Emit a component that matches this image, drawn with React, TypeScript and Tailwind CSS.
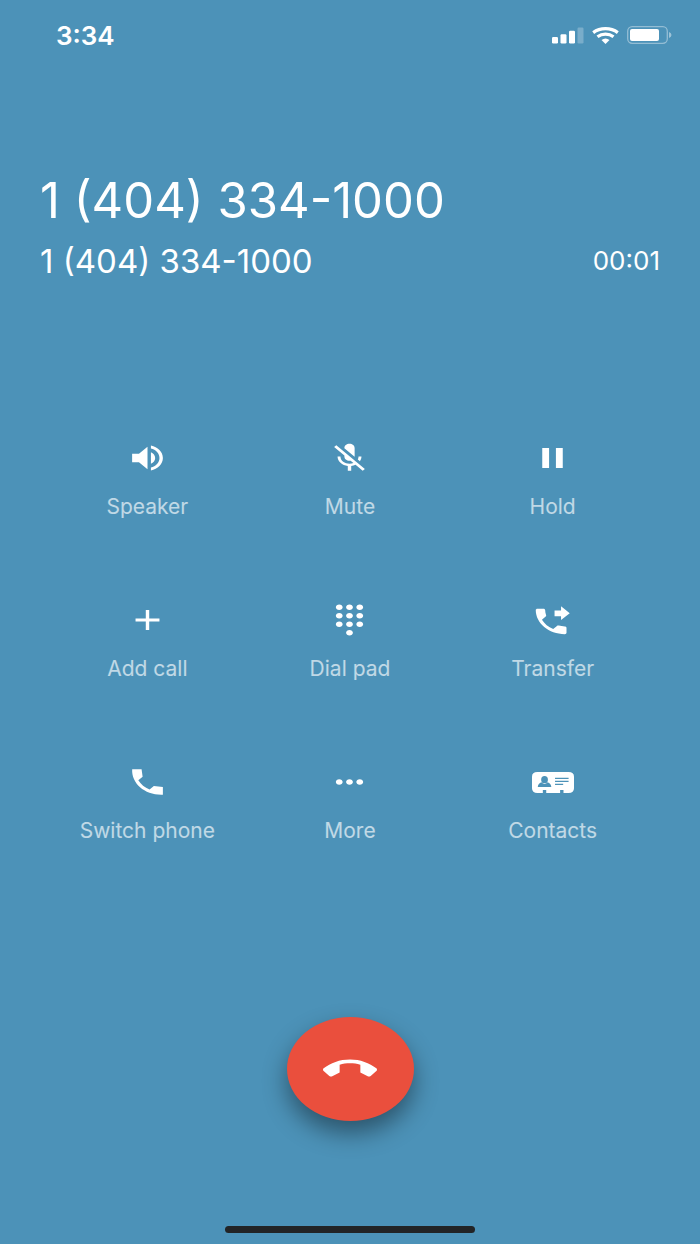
import type { ReactNode } from "react";

type IconProps = {
    path: string;
    className?: string;
};

type Action = {
    label: string;
    icon: ReactNode;
};

const Icon = ({ path, className = "w-[41px] h-[34px]" }: IconProps) => (
    <svg viewBox="0 0 24 24" preserveAspectRatio="none" fill="currentColor" className={className} aria-hidden="true">
        <path d={path} />
    </svg>
);

const ContactsIcon = () => (
    <span className="flex h-[34px] items-center">
        <svg viewBox="0 0 124 63" preserveAspectRatio="none" className="w-[42px] h-[21px]" aria-hidden="true">
            <path
                fill="currentColor"
                d="M16 0H108Q124 0 124 14V49Q124 63 108 63H93V54H83V63H42V54H32V63H16Q0 63 0 49V14Q0 0 16 0Z"
            />
            <g fill="#4c92b8">
                <ellipse cx="37" cy="23" rx="10" ry="11" />
                <path d="M17 45Q18 34 28 31Q37 41 46 31Q56 34 57 45Z" />
                <path d="M68 17H108V21H68ZM68 26H108V30H68ZM68 35H92V39H68Z" />
            </g>
        </svg>
    </span>
);

const actions: Action[] = [
    {
        label: "Speaker",
        icon: <Icon path="M3 9v6h4l5 5V4L7 9H3zm13.5 3c0-1.77-1.02-3.29-2.5-4.03v8.05c1.48-.73 2.5-2.25 2.5-4.02zM14 3.23v2.06c2.89.86 5 3.54 5 6.71s-2.11 5.85-5 6.71v2.06c4.01-.91 7-4.49 7-8.77s-2.99-7.86-7-8.77z" />,
    },
    {
        label: "Mute",
        icon: <Icon path="M19 11h-1.7c0 .74-.16 1.43-.43 2.05l1.23 1.23c.56-.98.9-2.09.9-3.28zm-4.02.17c0-.06.02-.11.02-.17V5c0-1.66-1.34-3-3-3S9 3.34 9 5v.18l5.98 5.99zM4.27 3L3 4.27l6.01 6.01V11c0 1.66 1.33 3 2.99 3 .22 0 .44-.03.65-.08l1.66 1.66c-.71.33-1.5.52-2.31.52-2.76 0-5.3-2.1-5.3-5.1H5c0 3.41 2.72 6.23 6 6.72V21h2v-3.28c.91-.13 1.77-.45 2.54-.9L19.73 21 21 19.73 4.27 3z" />,
    },
    { label: "Hold", icon: <Icon path="M6 19h4V5H6v14zm8-14v14h4V5h-4z" /> },
    { label: "Add call", icon: <Icon path="M19 13h-6v6h-2v-6H5v-2h6V5h2v6h6v2z" /> },
    {
        label: "Dial pad",
        icon: <Icon path="M12 19c-1.1 0-2 .9-2 2s.9 2 2 2 2-.9 2-2-.9-2-2-2zM6 1c-1.1 0-2 .9-2 2s.9 2 2 2 2-.9 2-2-.9-2-2-2zm0 6c-1.1 0-2 .9-2 2s.9 2 2 2 2-.9 2-2-.9-2-2-2zm0 6c-1.1 0-2 .9-2 2s.9 2 2 2 2-.9 2-2-.9-2-2-2zm12-8c1.1 0 2-.9 2-2s-.9-2-2-2-2 .9-2 2 .9 2 2 2zm-6 8c-1.1 0-2 .9-2 2s.9 2 2 2 2-.9 2-2-.9-2-2-2zm6 0c-1.1 0-2 .9-2 2s.9 2 2 2 2-.9 2-2-.9-2-2-2zm0-6c-1.1 0-2 .9-2 2s.9 2 2 2 2-.9 2-2-.9-2-2-2zm-6 0c-1.1 0-2 .9-2 2s.9 2 2 2 2-.9 2-2-.9-2-2-2zm0-6c-1.1 0-2 .9-2 2s.9 2 2 2 2-.9 2-2-.9-2-2-2z" />,
    },
    {
        label: "Transfer",
        icon: <Icon path="M17 2.3l5.1 4.9L17 12V9.3h-3.8V5.3H17zM19.2 16.5c-1.25 0-2.45-.2-3.57-.57-.35-.11-.74-.03-1.02.24l-2.2 2.2c-2.83-1.44-5.15-3.75-6.59-6.59l2.2-2.21c.28-.26.36-.65.25-1-.37-1.12-.57-2.32-.57-3.57 0-.55-.45-1-1-1H3.2c-.55 0-1 .45-1 1 0 9.39 7.61 17 17 17 .55 0 1-.45 1-1v-3.5c0-.55-.45-1-1-1z" />,
    },
    {
        label: "Switch phone",
        icon: <Icon path="M21 15.46l-5.27-.61-2.52 2.52c-2.83-1.44-5.15-3.75-6.59-6.59l2.53-2.53L8.54 3H3.03C2.45 13.18 10.82 21.55 21 20.97v-5.51z" />,
    },
    {
        label: "More",
        icon: <Icon path="M6 10c-1.1 0-2 .9-2 2s.9 2 2 2 2-.9 2-2-.9-2-2-2zm12 0c-1.1 0-2 .9-2 2s.9 2 2 2 2-.9 2-2-.9-2-2-2zm-6 0c-1.1 0-2 .9-2 2s.9 2 2 2 2-.9 2-2-.9-2-2-2z" />,
    },
    { label: "Contacts", icon: <ContactsIcon /> },
];

const StatusBar = () => (
    <div className="flex h-[70px] items-center justify-between pl-14 pr-7">
        <span className="text-[26px] font-semibold">3:34</span>
        <div className="flex items-center gap-2">
            {/* signal */}
            <svg viewBox="0 0 32 17" fill="currentColor" className="w-8 h-[17px]" aria-hidden="true">
                <rect x="0" y="10" width="6" height="6.5" rx="1.2" />
                <rect x="8.5" y="7.3" width="6" height="9.2" rx="1.2" />
                <rect x="17" y="3.7" width="6" height="12.8" rx="1.2" />
                <rect x="25.5" y="0.5" width="6" height="16" rx="1.2" opacity=".25" />
            </svg>
            {/* wifi */}
            <svg viewBox="0 0 27 17" className="w-[27px] h-[17px]" aria-hidden="true">
                <g fill="none" stroke="currentColor" strokeWidth="3.2">
                    <path d="M1.2 5.6Q6.5 1.7 13.5 1.7T25.8 5.6" />
                    <path d="M5.5 9.8Q9 7.2 13.5 7.2T21.5 9.8" />
                </g>
                <path fill="currentColor" d="M9.500 13Q13.500 10 17.500 13L13.500 17Z" />
            </svg>
            {/* battery */}
            <svg viewBox="0 0 45 18" className="w-[45px] h-[18px]" aria-hidden="true">
                <rect x="0.7" y="0.7" width="39.6" height="16.6" rx="4.5" fill="none" stroke="currentColor" strokeWidth="1.3" opacity=".4" />
                <rect x="3" y="3" width="29" height="12" rx="2" fill="currentColor" />
                <path d="M42 6Q44.5 7 44.5 9T42 12Z" fill="currentColor" opacity=".45" />
            </svg>
        </div>
    </div>
);

const App = () => {
    return (
        <main className="flex min-h-screen flex-col bg-[#4c92b8] font-['Inter',sans-serif] text-white">
            <StatusBar />

            <header className="px-10 pt-[103px]">
                <h1 className="text-[49px] leading-[56px]">1 (404) 334-1000</h1>
                <div className="mt-3 flex items-center justify-between">
                    <p className="text-[33px] leading-10">1 (404) 334-1000</p>
                    <time className="text-[26px] leading-10">00:01</time>
                </div>
            </header>

            <section className="mt-40 grid grid-cols-3 gap-y-[82px] px-[46px]">
                {actions.map(({ label, icon }) => (
                    <button key={label} type="button" className="flex flex-col items-center gap-[18px]">
                        {icon}
                        <span className="text-[21px] leading-7 text-white/65">{label}</span>
                    </button>
                ))}
            </section>

            <div className="mt-auto flex flex-col items-center pb-[11px]">
                <button
                    type="button"
                    aria-label="End call"
                    className="flex h-[104px] w-[127px] items-center justify-center rounded-[50%] bg-[#ea4f3d] shadow-[0_12px_24px_rgba(0,0,0,0.42)]"
                >
                    <Icon
                        className="w-[54px] h-[46px]"
                        path="M12 9c-1.6 0-3.15.25-4.6.72v4.1l-3.5 2.1q-.6.1-1.1-.3L.29 13.08c-.18-.17-.29-.42-.29-.7 0-.28.11-.53.29-.71C3.34 8.78 7.46 7 12 7s8.66 1.78 11.71 4.67c.18.18.29.43.29.71 0 .28-.11.53-.29.71l-2.51 2.53q-.5.4-1.1.3l-3.5-2.1v-4.1C15.15 9.25 13.6 9 12 9z"
                    />
                </button>
                <div className="mt-[105px] h-[7px] w-[250px] rounded-full bg-[#222426]" />
            </div>
        </main>
    );
};

export default App;
